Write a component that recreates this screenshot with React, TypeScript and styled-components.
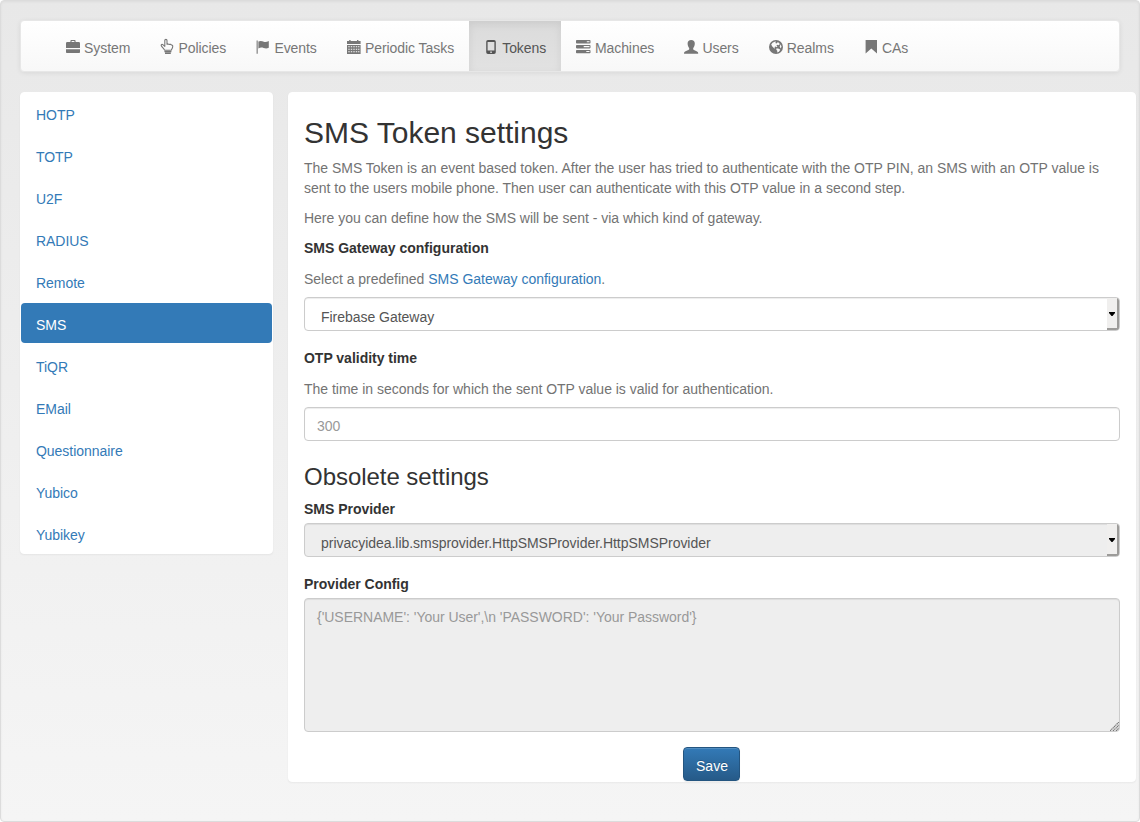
import React from "react";
import styled, { createGlobalStyle } from "styled-components";

const GlobalStyle = createGlobalStyle`
  * { box-sizing: border-box; }
  body {
    margin: 0;
    background: #fff;
    color: #333;
    font: 14px/20px "Liberation Sans", Arial, sans-serif;
    letter-spacing: -0.016px;
  }
`;

const Well = styled.div`
  width: 1140px;
  height: 822px;
  padding: 19px;
  border: 1px solid #dcdcdc;
  border-radius: 4px;
  background: linear-gradient(to bottom, #e8e8e8 0%, #f5f5f5 100%);
  box-shadow: inset 0 1px 3px rgba(0, 0, 0, 0.05), 0 1px 0 rgba(255, 255, 255, 0.1);
`;

const Navbar = styled.nav`
  display: flex;
  height: 52px;
  margin-bottom: 20px;
  padding-left: 30px;
  border: 1px solid #e7e7e7;
  border-radius: 4px;
  background: linear-gradient(to bottom, #fff 0%, #f8f8f8 100%);
  box-shadow: inset 0 1px 0 rgba(255, 255, 255, 0.15), 0 1px 5px rgba(0, 0, 0, 0.075);
  letter-spacing: -0.06px;
`;

const NavItem = styled.a<{ $active?: boolean }>`
  display: flex;
  align-items: center;
  gap: 4.1px;
  padding: 17px 15px 13px;
  white-space: nowrap;
  color: ${(p) => (p.$active ? "#555" : "#777")};
  background: ${(p) => (p.$active ? "linear-gradient(to bottom, #dbdbdb 0%, #e2e2e2 100%)" : "none")};
  box-shadow: ${(p) => (p.$active ? "inset 0 3px 9px rgba(0, 0, 0, 0.075)" : "none")};
`;

const Glyph = styled.svg<{ $wide?: boolean }>`
  width: 14px;
  height: 14px;
  margin-top: -2px;
  margin-right: ${(p) => (p.$wide ? "0.6px" : "0")};
  flex: none;
  overflow: visible;
  fill: currentColor;
`;

const Columns = styled.div`
  display: flex;
  align-items: flex-start;
  gap: 15px;
  margin-right: -16px;
`;

const Card = styled.div`
  border: 1px solid #fff;
  border-radius: 4px;
  background: #fff;
  box-shadow: 0 1px 2px rgba(0, 0, 0, 0.05);
`;

const Sidebar = styled(Card)`
  display: flex;
  flex-direction: column;
  gap: 2px;
  flex: none;
  width: 253px;
`;

const SideLink = styled.a<{ $active?: boolean }>`
  height: 40px;
  padding: 12px 15px 8px;
  border-radius: 4px;
  letter-spacing: -0.04px;
  color: ${(p) => (p.$active ? "#fff" : "#337ab7")};
  background: ${(p) => (p.$active ? "#337ab7" : "transparent")};
`;

const Content = styled(Card)`
  flex: 1;
  height: 690px;
  padding: 23px 15px 0;
`;

const Title = styled.h2`
  margin: 0 0 9px;
  font-size: 30px;
  font-weight: 400;
  line-height: 33px;
`;

const Subtitle = styled.h3`
  margin: 23px 0 9px;
  font-size: 24px;
  font-weight: 400;
  line-height: 26px;
  letter-spacing: -0.04px;
`;

const Text = styled.p`
  margin: 0 0 10px;
  color: #737373;
`;

const Help = styled(Text)`
  margin: 11px 0 8px;
`;

const Link = styled.a`
  color: #337ab7;
`;

const Label = styled.label`
  display: block;
  font-weight: 700;
`;

const Group = styled.div`
  margin-bottom: 17px;
`;

const SelectBox = styled.div<{ $disabled?: boolean }>`
  display: flex;
  justify-content: space-between;
  height: 34px;
  padding-left: 16px;
  border: 1px solid #ccc;
  border-radius: 4px;
  overflow: hidden;
  line-height: 20px;
  letter-spacing: -0.03px;
  color: #555;
  background: ${(p) => (p.$disabled ? "#eee" : "#fff")};
  box-shadow: inset 0 1px 1px rgba(0, 0, 0, 0.075);
`;

const SelectValue = styled.span`
  padding-top: 9px;
`;

const SelectButton = styled.span`
  display: flex;
  align-items: center;
  justify-content: center;
  width: 12px;
  padding-top: 2px;
  border-right: 2px solid #9c9b99;
  border-bottom: 2px solid #9c9b99;
  background: #f0efee;
`;

const Input = styled.input`
  display: block;
  width: 100%;
  height: 34px;
  padding: 9px 12px 5px;
  border: 1px solid #ccc;
  border-radius: 4px;
  font: inherit;
  letter-spacing: inherit;
  box-shadow: inset 0 1px 1px rgba(0, 0, 0, 0.075);
  &::placeholder { color: #999; opacity: 1; }
`;

const AreaWrap = styled.div`
  position: relative;
  margin-top: 4px;
`;

const Area = styled.textarea`
  display: block;
  width: 100%;
  height: 134px;
  padding: 8px 12px;
  border: 1px solid #ccc;
  border-radius: 4px;
  resize: none;
  font: inherit;
  letter-spacing: -0.03px;
  background: #eee;
  box-shadow: inset 0 1px 1px rgba(0, 0, 0, 0.075);
  &::placeholder { color: #999; opacity: 1; }
`;

const Grip = styled.svg`
  position: absolute;
  right: 1px;
  bottom: 1px;
  width: 9px;
  height: 9px;
`;

const Actions = styled.div`
  display: flex;
  justify-content: center;
  margin-top: 15px;
`;

const SaveButton = styled.button`
  width: 57px;
  height: 34px;
  margin-right: 1px;
  padding: 4px 0 0 1px;
  border: 1px solid #245580;
  border-radius: 4px;
  font: inherit;
  color: #fff;
  text-shadow: 0 -1px 0 rgba(0, 0, 0, 0.2);
  background: linear-gradient(to bottom, #337ab7 0%, #265a88 100%);
  box-shadow: inset 0 1px 0 rgba(255, 255, 255, 0.15), 0 1px 1px rgba(0, 0, 0, 0.075);
`;

const icons: Record<string, React.ReactNode> = {
  briefcase: (
    <path
      fillRule="evenodd"
      d="M4.4 2V1.2C4.4.5 4.8 0 5.5 0H8.5C9.2 0 9.6.5 9.6 1.2V2H12.8Q14 2 14 3.2V8.1H0V3.2Q0 2 1.2 2ZM5.6 1.1V2H8.4V1.1ZM0 9.3H14V12.2Q14 13 13.2 13H.8Q0 13 0 12.2Z"
    />
  ),
  hand: (
    <g>
      <path
        fill="none"
        stroke="currentColor"
        strokeWidth="1.1"
        strokeLinejoin="round"
        d="M4.6 10.3C4.4 8.6 1.6 6.9 1.2 5.5C1 4.6 2 4 2.8 4.6L4.8 6.3V.5C4.8-1 7-1 7 .5V4.2L7.9 3.9L9.4 4.4L10.6 4.3L11.5 5C12.5 4.9 12.8 5.5 12.7 6.6C12.6 8.3 11.6 9 11.2 10.3Z"
      />
      <path d="M4.4 11H11.4V12.2H4.4ZM5 12.6H10.8V13.9H5Z" />
    </g>
  ),
  flag: (
    <path d="M.6.5H1.7V13.7H.6ZM2.4 1.6C4.8.4 6.2 1.3 7.8 1.8C9.6 2.4 11 1.9 12.8.9V7.7C10.5 8.8 9.4 8.4 7.6 7.9C5.8 7.4 4.4 7.3 2.4 8.4Z" />
  ),
  calendar: (
    <path
      fillRule="evenodd"
      d="M2.2 0H3.6V1H10V0H11.4V1H13.6V4.1H0V1H2.2ZM0 5H13.6V14H0ZM1.3 6.2V7.2H2.7V6.2ZM3.8 6.2V7.2H5.2V6.2ZM6.3 6.2V7.2H7.7V6.2ZM8.8 6.2V7.2H10.2V6.2ZM11.1 6.2V7.2H12.4V6.2ZM1.3 8.7V9.7H2.7V8.7ZM3.8 8.7V9.7H5.2V8.7ZM6.3 8.7V9.7H7.7V8.7ZM8.8 8.7V9.7H10.2V8.7ZM11.1 8.7V9.7H12.4V8.7ZM1.3 11.2V12.3H2.7V11.2ZM3.8 11.2V12.3H5.2V11.2ZM6.3 11.2V12.3H7.7V11.2ZM8.8 11.2V12.3H10.2V11.2ZM11.1 11.2V12.3H12.4V11.2Z"
    />
  ),
  phone: (
    <path
      fillRule="evenodd"
      d="M4 0H10Q11.8 0 11.8 1.8V12.2Q11.8 14 10 14H4Q2.2 14 2.2 12.2V1.8Q2.2 0 4 0ZM3.6 2V10.4H10.4V2ZM6.3 11.4V13H7.8V11.4Z"
    />
  ),
  tasks: (
    <path
      fillRule="evenodd"
      d="M.8 0H13.7Q14.5 0 14.5 .8V2.7Q14.5 3.5 13.7 3.5H.8Q0 3.5 0 2.7V.8Q0 0 .8 0ZM10.8 1.2V2.3H13.5V1.2ZM.8 5H13.7Q14.5 5 14.5 5.8V7.6Q14.5 8.4 13.7 8.4H.8Q0 8.4 0 7.6V5.8Q0 5 .8 5ZM7.7 6.1V7.2H13.5V6.1ZM.8 9.9H13.7Q14.5 9.9 14.5 10.7V12.4Q14.5 13.2 13.7 13.2H.8Q0 13.2 0 12.4V10.7Q0 9.9 .8 9.9ZM10.3 11V12.1H13.5V11Z"
    />
  ),
  user: (
    <path d="M7.2 0C9.5 0 10.8 1.4 10.8 3.6C10.8 5.7 9.9 7.4 9.2 8.2V9.2C9.4 10.2 12.8 10.8 13.8 12C14.1 12.4 14.2 12.9 14.2 13.8H0C0 12.9.1 12.4.4 12C1.4 10.8 5 10.2 5.2 9.2V8.2C4.5 7.4 3.6 5.7 3.6 3.6C3.6 1.4 4.9 0 7.2 0Z" />
  ),
  globe: (
    <path
      fillRule="evenodd"
      d="M7 0A7 7 0 1 1 7 14A7 7 0 1 1 7 0ZM3.5 2.7L5.6 1.7L7.1 1.6L6.3 2.9L7.5 3.4L8.7 2.2L10 2.8L10.8 4.2L9.4 5.2L8.2 4.8L7.4 5.7L8.4 6.5L8 7.2L6.3 6.5L5.3 7.3L6.2 8.1L5.4 8.5L3.3 6.6L2.2 4.4ZM11.7 4.3L12.5 6.7L11.6 8.5L10.7 6.5ZM7.6 8.3L9.9 8.8L11.3 9.7L9.9 11.7L8.2 12.6L8.3 10.8L7.3 9.8Z"
    />
  ),
  bookmark: <path d="M1.6 0H13V13.4L7.3 8.6L1.6 13.4Z" />,
};

const navItems = [
  ["briefcase", "System"],
  ["hand", "Policies"],
  ["flag", "Events"],
  ["calendar", "Periodic Tasks"],
  ["phone", "Tokens"],
  ["tasks", "Machines"],
  ["user", "Users"],
  ["globe", "Realms"],
  ["bookmark", "CAs"],
];

const tokenTypes = [
  "HOTP", "TOTP", "U2F", "RADIUS", "Remote", "SMS",
  "TiQR", "EMail", "Questionnaire", "Yubico", "Yubikey",
];

function Select({ value, disabled }: { value: string; disabled?: boolean }) {
  return (
    <SelectBox $disabled={disabled}>
      <SelectValue>{value}</SelectValue>
      <SelectButton>
        <svg width="6" height="4" viewBox="0 0 6 4">
          <path d="M0 0H6V1L3.5 4H2.5L0 1Z" />
        </svg>
      </SelectButton>
    </SelectBox>
  );
}

export default function App() {
  return (
    <>
      <GlobalStyle />
      <Well>
        <Navbar>
          {navItems.map(([icon, label]) => (
            <NavItem key={label} $active={label === "Tokens"}>
              <Glyph viewBox="0 0 14 14" $wide={icon === "tasks"}>{icons[icon]}</Glyph>
              <span>{label}</span>
            </NavItem>
          ))}
        </Navbar>
        <Columns>
          <Sidebar>
            {tokenTypes.map((name) => (
              <SideLink key={name} $active={name === "SMS"}>{name}</SideLink>
            ))}
          </Sidebar>
          <Content>
            <Title>SMS Token settings</Title>
            <Text>
              The SMS Token is an event based token. After the user has tried to authenticate with
              the OTP PIN, an SMS with an OTP value is sent to the users mobile phone. Then user can
              authenticate with this OTP value in a second step.
            </Text>
            <Text>Here you can define how the SMS will be sent - via which kind of gateway.</Text>
            <Group>
              <Label>SMS Gateway configuration</Label>
              <Help>
                Select a predefined <Link>SMS Gateway configuration</Link>.
              </Help>
              <Select value="Firebase Gateway" />
            </Group>
            <Group>
              <Label>OTP validity time</Label>
              <Help>The time in seconds for which the sent OTP value is valid for authentication.</Help>
              <Input placeholder="300" />
            </Group>
            <Subtitle>Obsolete settings</Subtitle>
            <Group>
              <Label>SMS Provider</Label>
              <AreaWrap>
                <Select value="privacyidea.lib.smsprovider.HttpSMSProvider.HttpSMSProvider" disabled />
              </AreaWrap>
            </Group>
            <Label>Provider Config</Label>
            <AreaWrap>
              <Area disabled placeholder={"{'USERNAME': 'Your User',\\n 'PASSWORD': 'Your Password'}"} />
              <Grip viewBox="0 0 9 9" stroke="#777" strokeWidth="1.2" strokeDasharray="1.4 .5">
                <path d="M0 9L9 0M3 9L9 3M6 9L9 6" />
              </Grip>
            </AreaWrap>
            <Actions>
              <SaveButton>Save</SaveButton>
            </Actions>
          </Content>
        </Columns>
      </Well>
    </>
  );
}
